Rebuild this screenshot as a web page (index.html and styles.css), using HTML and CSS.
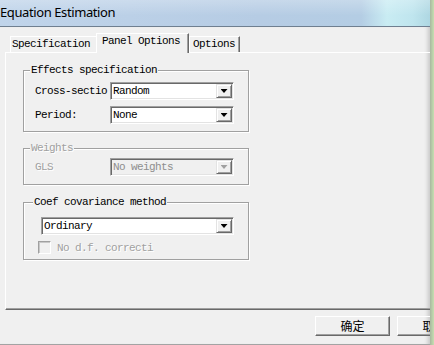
FILE: index.html
```html
<!DOCTYPE html>
<html>
<head>
<meta charset="utf-8">
<link rel="stylesheet" href="styles.css">
</head>
<body>
<div class="window">
  <div class="titlebar">Equation Estimation</div>
  <div class="client">
    <div class="dialog">
      <div class="tabs">
        <div class="tab tab-spec">Specification</div>
        <div class="tab tab-panel selected">Panel Options</div>
        <div class="tab tab-opt">Options</div>
      </div>
      <div class="panel">
        <fieldset class="group g-effects">
          <legend>Effects specification</legend>
          <div class="row">
            <span class="label">Cross-sectio</span>
            <div class="combo"><span class="val">Random</span><span class="btn"><i></i></span></div>
          </div>
          <div class="row row2">
            <span class="label">Period:</span>
            <div class="combo"><span class="val">None</span><span class="btn"><i></i></span></div>
          </div>
        </fieldset>
        <fieldset class="group g-weights disabled">
          <legend>Weights</legend>
          <div class="row">
            <span class="label">GLS</span>
            <div class="combo off"><span class="val">No weights</span><span class="btn"><i></i></span></div>
          </div>
        </fieldset>
        <fieldset class="group g-coef">
          <legend>Coef covariance method</legend>
          <div class="combo wide"><span class="val">Ordinary</span><span class="btn"><i></i></span></div>
          <div class="check">
            <span class="box"></span>
            <span class="ctext">No d.f. correcti</span>
          </div>
        </fieldset>
      </div>
      <div class="buttons">
        <div class="button">确定</div>
        <div class="button">取消</div>
      </div>
    </div>
  </div>
</div>
<div class="desk"></div>
</body>
</html>
```
FILE: styles.css
```css
html, body {
  margin: 0;
  padding: 0;
  height: 345px;
  overflow: hidden;
}
body {
  display: flex;
  background: #f0f0f0;
  font-family: "Liberation Mono", "DejaVu Sans Mono", monospace;
  font-size: 11px;
  letter-spacing: -0.6px;
  color: #000;
}
.window {
  width: 430px;
  height: 345px;
  display: flex;
  flex-direction: column;
  overflow: hidden;
  flex: none;
}
.desk {
  flex: 1;
  background: linear-gradient(to right, #a9b7a0, #c6dfb0);
}
.titlebar {
  height: 26px;
  border-bottom: 1px solid #6f7f90;
  background:
    linear-gradient(to bottom, rgba(255,255,255,0.25), rgba(255,255,255,0) 60%),
    linear-gradient(to right, #c0d4ea 0%, #b6cce4 60%, #b4cde4 84%, #c9ecf3 90%, #bfe5ee 96%, #aed7e2 100%);
  font-family: "Noto Sans", "Open Sans", sans-serif;
  font-size: 13px;
  letter-spacing: -0.4px;
  line-height: 25px;
  padding-left: 0;
  white-space: nowrap;
  flex: none;
}
.client {
  flex: 1;
  overflow: hidden;
  position: relative;
  border-bottom: 1px solid #a3a3a3;
  box-shadow: inset -5px 0 4px -3px rgba(0,0,0,0.18);
}
.dialog {
  width: 480px;
}
.tabs {
  display: flex;
  align-items: flex-end;
  height: 19px;
  padding-top: 6px;
  padding-left: 10px;
  position: relative;
  z-index: 2;
}
.tab {
  box-sizing: border-box;
  height: 16px;
  border-top: 1px solid #fff;
  border-left: 1px solid #fff;
  border-right: 1px solid #696969;
  box-shadow: inset -1px 0 #a0a0a0;
  background: #f0f0f0;
  line-height: 14px;
  white-space: nowrap;
}
.tab-spec { width: 86px; padding-left: 1px; border-right: none; box-shadow: none; }
.tab-panel { width: 93px; padding-left: 5px; }
.tab-opt { width: 51px; padding-left: 3px; }
.tab.selected {
  height: 20px;
  margin-bottom: -1px;
  line-height: 15px;
}
.panel {
  box-sizing: border-box;
  margin-left: 5px;
  height: 258px;
  border-top: 1px solid #fff;
  border-left: 1px solid #fff;
  border-bottom: 1px solid #696969;
  box-shadow: inset 0 -1px #a0a0a0;
  padding: 11px 0 0 17px;
  display: flex;
  flex-direction: column;
  align-items: flex-start;
}
.group {
  box-sizing: border-box;
  width: 226px;
  margin: 0;
  min-width: 0;
  border: 1px solid #a0a0a0;
  box-shadow: inset 1px 1px #fff, 1px 1px #fff;
  padding: 0 0 0 11px;
}
.group legend {
  margin-left: -5px;
  padding: 0 1px;
  line-height: 12px;
  background: #f0f0f0;
  white-space: nowrap;
}
.g-effects { padding-top: 6px; padding-bottom: 7px; }
.g-weights { margin-top: 10px; padding-top: 4px; padding-bottom: 8px; }
.g-coef { margin-top: 11px; padding-top: 9px; padding-bottom: 5px; padding-left: 14px; }
.row {
  display: flex;
  align-items: center;
  height: 18px;
}
.row2 { margin-top: 6px; }
.label {
  width: 75px;
  flex: none;
  white-space: nowrap;
}
.disabled legend, .disabled .label {
  color: #a0a0a0;
  text-shadow: 1px 1px #fff;
}
.combo {
  box-sizing: border-box;
  width: 124px;
  height: 18px;
  display: flex;
  align-items: stretch;
  border: 1px solid;
  border-color: #a0a0a0 #fff #fff #a0a0a0;
  box-shadow: inset 1px 1px #696969, inset -1px -1px #e3e3e3;
  background: #fff;
  padding: 1px;
}
.combo.wide {
  width: 193px;
  margin-left: 3px;
}
.val {
  flex: 1;
  padding-left: 1px;
  line-height: 14px;
  white-space: nowrap;
  overflow: hidden;
}
.btn {
  box-sizing: border-box;
  width: 16px;
  flex: none;
  background: #f0f0f0;
  border: 1px solid;
  border-color: #e3e3e3 #696969 #696969 #e3e3e3;
  box-shadow: inset 1px 1px #fff, inset -1px -1px #a0a0a0;
  display: flex;
  align-items: center;
  justify-content: center;
}
.btn i {
  display: block;
  width: 7px;
  height: 4px;
  background: #000;
  clip-path: polygon(0 0, 100% 0, 50% 100%);
}
.combo.off {
  background: #f0f0f0;
}
.combo.off .val { color: #8e8e8e; }
.combo.off .btn i { background: #a0a0a0; }
.check {
  display: flex;
  align-items: center;
  height: 13px;
  margin-top: 6px;
}
.box {
  box-sizing: border-box;
  width: 13px;
  height: 13px;
  border: 1px solid;
  border-color: #a0a0a0 #fff #fff #a0a0a0;
  box-shadow: inset 1px 1px #c8c8c8;
  background: #f0f0f0;
  flex: none;
}
.ctext {
  margin-left: 6px;
  color: #a0a0a0;
  text-shadow: 1px 1px #fff;
  white-space: nowrap;
}
.buttons {
  display: flex;
  justify-content: flex-end;
  gap: 7px;
  padding: 6px 8px 0 0;
}
.button {
  box-sizing: border-box;
  width: 75px;
  height: 20px;
  border: 1px solid;
  border-color: #fff #696969 #696969 #fff;
  box-shadow: inset -1px -1px #a0a0a0;
  text-align: center;
  font-family: "Noto Sans CJK SC", sans-serif;
  font-size: 12px;
  letter-spacing: 0;
  line-height: 17px;
}
```
